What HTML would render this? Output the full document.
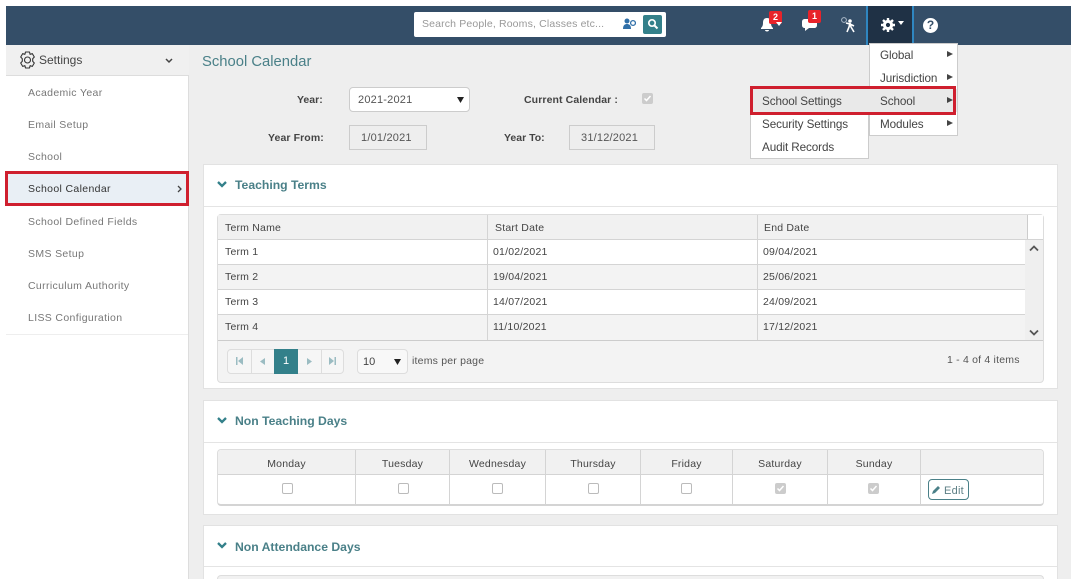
<!DOCTYPE html>
<html><head><meta charset="utf-8"><style>
html,body{margin:0;padding:0;width:1073px;height:579px;overflow:hidden;background:#fff}
body{position:relative;font-family:"Liberation Sans",sans-serif;font-size:11px;color:#444}
#w{left:0;top:0;width:1073px;height:579px;overflow:hidden;filter:blur(.35px)}
div,span,svg{position:absolute;box-sizing:border-box}
.t{white-space:nowrap;line-height:14px}
.nav{left:28px;color:#777;font-size:10.5px;letter-spacing:.35px}
.lbl{font-weight:bold;font-size:10.5px;color:#444}
.box{background:#eee;border:1px solid #ccc}
.card{left:203px;width:855px;background:#fff;border:1px solid #e2e2e2}
.h{left:235px;font-size:12.2px;font-weight:bold;color:#4a8088}
.m{font-size:11.7px;color:#444;letter-spacing:-.1px}
.c{font-size:10.5px;letter-spacing:.2px;color:#444}
.cb{width:11px;height:11px;border:1px solid #bbb;border-radius:2px;background:#fff}
.ck{width:11px;height:11px;border-radius:2px;background:#ccc;color:#fff}
.ln{background:#d4d4d4}
.ctr{text-align:center}
</style></head><body><div id="w">
<div style="left:6px;top:45px;width:1065px;height:534px;background:#eee"></div>
<div style="left:6px;top:6px;width:1065px;height:39px;background:#344e68"></div>

<!-- search -->
<div style="left:414px;top:12px;width:252px;height:25px;background:#fff;border-radius:2px"></div>
<div class="t" style="left:422px;top:17px;color:#999;font-size:10.5px;letter-spacing:.15px">Search People, Rooms, Classes etc...</div>
<svg style="left:623px;top:18px" width="13" height="12" viewBox="0 0 13 12"><circle cx="4" cy="3" r="2.5" fill="#2f6fa8"/><path d="M0 11c0-4 2-5 4-5s4 1 4 5z" fill="#2f6fa8"/><circle cx="10" cy="5" r="2.4" fill="none" stroke="#2f6fa8" stroke-width="1.3"/></svg>
<div style="left:643px;top:15px;width:19px;height:19px;background:#33808a;border-radius:2px"></div>
<svg style="left:647px;top:18px" width="12" height="12" viewBox="0 0 12 12"><circle cx="5" cy="5" r="3.2" fill="none" stroke="#fff" stroke-width="1.7"/><path d="M7.5 7.5l3 3" stroke="#fff" stroke-width="2"/></svg>

<!-- header icons -->
<svg style="left:760px;top:17px" width="15" height="16" viewBox="0 0 15 16"><path d="M7 1c3 0 4 2 4 5 0 3 1 4 2 5v1H1v-1c1-1 2-2 2-5 0-3 1-5 4-5z" fill="#fff"/><path d="M5 13h4c0 2-4 2-4 0z" fill="#fff"/></svg>
<div style="left:769px;top:11px;width:13px;height:13px;background:#e8232a;border-radius:2px;color:#fff;font-size:9px;font-weight:bold;text-align:center;line-height:13px">2</div>
<svg style="left:776px;top:22px" width="7" height="5" viewBox="0 0 7 5"><path d="M0 0h6L3 4z" fill="#fff"/></svg>
<svg style="left:802px;top:18px" width="15" height="14" viewBox="0 0 15 14"><path d="M3 1h9c2 0 3 1 3 3v3c0 2-1 3-3 3H7l-4 3v-3c-2 0-3-1-3-3V4c0-2 1-3 3-3z" fill="#fff"/></svg>
<div style="left:808px;top:10px;width:13px;height:13px;background:#e8232a;border-radius:2px;color:#fff;font-size:9px;font-weight:bold;text-align:center;line-height:13px">1</div>
<svg style="left:841px;top:17px" width="15" height="16" viewBox="0 0 15 16"><circle cx="3" cy="3" r="2.4" fill="none" stroke="#aebccb" stroke-width="1"/><circle cx="9" cy="4" r="1.8" fill="#fff"/><path d="M9 6l-1 4-2 5M9 6l1 4 3 5M5 6l4 1 4 2" stroke="#fff" stroke-width="1.6" fill="none"/></svg>
<div style="left:866px;top:6px;width:48px;height:39px;background:#1f3145;border-left:2px solid #2f86c0;border-right:2px solid #2f86c0"></div>
<svg style="left:881px;top:18px" width="14" height="14" viewBox="0 0 14 14"><circle cx="7" cy="7" r="3.6" fill="none" stroke="#fff" stroke-width="3"/><path d="M7 0v14M0 7h14M2 2l10 10M12 2L2 12" stroke="#fff" stroke-width="2.4" stroke-dasharray="2.6 8.8 2.6 0"/></svg>
<svg style="left:898px;top:21px" width="6" height="5" viewBox="0 0 6 5"><path d="M0 0h6L3 4z" fill="#fff"/></svg>
<div style="left:923px;top:18px;width:15px;height:15px;border-radius:50%;background:#fff;color:#344e68;font-size:12px;font-weight:bold;text-align:center;line-height:15px">?</div>

<!-- sidebar -->
<div style="left:6px;top:45px;width:183px;height:534px;background:#fff;border-right:1px solid #ddd"></div>
<div style="left:6px;top:45px;width:183px;height:31px;background:#f0f0f0;border-bottom:1px solid #ddd"></div>
<svg style="left:19px;top:51px" width="17" height="18" viewBox="0 0 17 18"><path d="M6.5 1h4l.6 2.300 2.200-.7 2 3.400-1.600 1.700v2.600l1.600 1.700-2 3.400-2.200-.7-.6 2.300h-4l-.6-2.300-2.200.7-2-3.400 1.600-1.700V7.700L1.700 6l2-3.400 2.200.7z" fill="none" stroke="#333" stroke-width="1.100" stroke-linejoin="round"/><circle cx="8.500" cy="9" r="3" fill="none" stroke="#333" stroke-width="1.100"/></svg>
<div class="t" style="left:39px;top:53px;font-size:12px;color:#444">Settings</div>
<svg style="left:165px;top:58px" width="8" height="6" viewBox="0 0 8 6"><path d="M1 1l3 3 3-3" fill="none" stroke="#444" stroke-width="1.500"/></svg>
<div class="t nav" style="top:86px">Academic Year</div>
<div class="t nav" style="top:118px">Email Setup</div>
<div class="t nav" style="top:150px">School</div>
<div style="left:5px;top:171px;width:184px;height:35px;background:#e9eff5;border:3px solid #cf1f2e"></div>
<div class="t nav" style="top:182px;color:#333">School Calendar</div>
<svg style="left:177px;top:185px" width="5" height="8" viewBox="0 0 5 8"><path d="M1 1l3 3-3 3" fill="none" stroke="#444" stroke-width="1.300"/></svg>
<div class="t nav" style="top:215px">School Defined Fields</div>
<div class="t nav" style="top:247px">SMS Setup</div>
<div class="t nav" style="top:279px">Curriculum Authority</div>
<div class="t nav" style="top:311px">LISS Configuration</div>
<div style="left:6px;top:334px;width:182px;height:1px;background:#eee"></div>

<!-- title + form -->
<div class="t" style="left:202px;top:54px;font-size:14.800px;color:#4a8088;line-height:16px">School Calendar</div>
<div class="t lbl" style="left:297px;top:93px">Year:</div>
<div style="left:349px;top:87px;width:121px;height:25px;background:#fff;border:1px solid #ccc;border-radius:4px"></div>
<div class="t" style="left:358px;top:93px;color:#555;letter-spacing:.2px">2021-2021</div>
<svg style="left:457px;top:97px" width="7" height="6" viewBox="0 0 7 6"><path d="M0 0h7L3.500 6z" fill="#222"/></svg>
<div class="t lbl" style="left:524px;top:93px;letter-spacing:.1px">Current Calendar :</div>
<div class="ck" style="left:642px;top:93px"></div>
<svg style="left:643px;top:94px" width="9" height="9" viewBox="0 0 9 9"><path d="M1.500 4.500l2 2 4-4.500" fill="none" stroke="#fff" stroke-width="1.500"/></svg>
<div class="t lbl" style="left:268px;top:131px;letter-spacing:.1px">Year From:</div>
<div class="box" style="left:349px;top:125px;width:78px;height:25px"></div>
<div class="t" style="left:361px;top:131px;color:#555;letter-spacing:.2px">1/01/2021</div>
<div class="t lbl" style="left:504px;top:131px">Year To:</div>
<div class="box" style="left:569px;top:125px;width:86px;height:25px"></div>
<div class="t" style="left:581px;top:131px;color:#555;letter-spacing:.2px">31/12/2021</div>

<!-- Teaching terms card -->
<div class="card" style="top:164px;height:225px"></div>
<div style="left:204px;top:206px;width:853px;height:1px;background:#e4e4e4"></div>
<svg style="left:217px;top:181px" width="10" height="7" viewBox="0 0 10 7"><path d="M1 1l4 4 4-4" fill="none" stroke="#33808a" stroke-width="2.300"/></svg>
<div class="t h" style="top:178px">Teaching Terms</div>

<div style="left:217px;top:214px;width:827px;height:169px;background:#f3f3f3;border:1px solid #ddd;border-radius:4px"></div>
<div style="left:218px;top:215px;width:809px;height:24px;background:#f1f1f1"></div>
<div style="left:1027px;top:215px;width:16px;height:24px;background:#fff;border-left:1px solid #ccc"></div>
<div class="ln" style="left:218px;top:239px;width:825px;height:1px"></div>
<div style="left:218px;top:240px;width:807px;height:25px;background:#fff"></div>
<div style="left:218px;top:265px;width:807px;height:25px;background:#f3f3f3"></div>
<div style="left:218px;top:290px;width:807px;height:25px;background:#fff"></div>
<div style="left:218px;top:315px;width:807px;height:25px;background:#f3f3f3"></div>
<div style="left:1025px;top:240px;width:18px;height:100px;background:#efefef"></div>
<div class="ln" style="left:218px;top:264px;width:807px;height:1px"></div>
<div class="ln" style="left:218px;top:289px;width:807px;height:1px"></div>
<div class="ln" style="left:218px;top:314px;width:807px;height:1px"></div>
<div style="left:218px;top:340px;width:825px;height:1px;background:#ccc"></div>
<div class="ln" style="left:487px;top:215px;width:1px;height:125px"></div>
<div class="ln" style="left:757px;top:215px;width:1px;height:125px"></div>
<svg style="left:1029px;top:245px" width="10" height="7" viewBox="0 0 10 7"><path d="M1 5.500l4-4 4 4" fill="none" stroke="#555" stroke-width="1.800"/></svg>
<svg style="left:1029px;top:329px" width="10" height="7" viewBox="0 0 10 7"><path d="M1 1.500l4 4 4-4" fill="none" stroke="#555" stroke-width="1.800"/></svg>

<div class="t c" style="left:225px;top:221px">Term Name</div><div class="t c" style="left:495px;top:221px">Start Date</div><div class="t c" style="left:764px;top:221px">End Date</div>
<div class="t c" style="left:225px;top:245px">Term 1</div><div class="t c" style="left:493px;top:245px">01/02/2021</div><div class="t c" style="left:763px;top:245px">09/04/2021</div>
<div class="t c" style="left:225px;top:270px">Term 2</div><div class="t c" style="left:493px;top:270px">19/04/2021</div><div class="t c" style="left:763px;top:270px">25/06/2021</div>
<div class="t c" style="left:225px;top:295px">Term 3</div><div class="t c" style="left:493px;top:295px">14/07/2021</div><div class="t c" style="left:763px;top:295px">24/09/2021</div>
<div class="t c" style="left:225px;top:320px">Term 4</div><div class="t c" style="left:493px;top:320px">11/10/2021</div><div class="t c" style="left:763px;top:320px">17/12/2021</div>

<!-- pager -->
<div style="left:227px;top:349px;width:117px;height:25px;background:#f6f6f6;border:1px solid #ddd;border-radius:4px"></div>
<div style="left:251px;top:350px;width:1px;height:23px;background:#ddd"></div>
<div style="left:274px;top:349px;width:24px;height:25px;background:#33808a;color:#fff;text-align:center;line-height:24px;font-size:11px">1</div>
<div style="left:321px;top:350px;width:1px;height:23px;background:#ddd"></div>
<svg style="left:235px;top:357px" width="9" height="8" viewBox="0 0 9 8"><path d="M1 0h1.500v8H1zM8 0v8L3 4z" fill="#9bbcc2"/></svg>
<svg style="left:259px;top:358px" width="7" height="7" viewBox="0 0 7 7"><path d="M6 0v7L1 3.500z" fill="#9bbcc2"/></svg>
<svg style="left:306px;top:358px" width="7" height="7" viewBox="0 0 7 7"><path d="M1 0v7l5-3.500z" fill="#9bbcc2"/></svg>
<svg style="left:328px;top:357px" width="9" height="8" viewBox="0 0 9 8"><path d="M1 0v8l5-4zM6.500 0H8v8H6.500z" fill="#9bbcc2"/></svg>
<div style="left:357px;top:349px;width:51px;height:25px;background:#f8f8f8;border:1px solid #ddd;border-radius:4px"></div>
<div class="t" style="left:363px;top:355px;color:#444">10</div>
<svg style="left:394px;top:359px" width="7" height="6" viewBox="0 0 7 6"><path d="M0 0h7L3.500 6z" fill="#222"/></svg>
<div class="t c" style="left:412px;top:354px;color:#555">items per page</div>
<div class="t c" style="left:947px;top:353px;color:#555">1 - 4 of 4 items</div>

<!-- Non teaching -->
<div class="card" style="top:400px;height:115px"></div>
<div style="left:204px;top:442px;width:853px;height:1px;background:#e4e4e4"></div>
<svg style="left:217px;top:417px" width="10" height="7" viewBox="0 0 10 7"><path d="M1 1l4 4 4-4" fill="none" stroke="#33808a" stroke-width="2.300"/></svg>
<div class="t h" style="top:414px">Non Teaching Days</div>
<div style="left:217px;top:449px;width:827px;height:57px;background:#fff;border:1px solid #ddd;border-bottom:2px solid #d4d4d4;border-radius:4px"></div>
<div style="left:218px;top:450px;width:825px;height:24px;background:#f1f1f1;border-radius:3px 3px 0 0"></div>
<div class="ln" style="left:218px;top:474px;width:825px;height:1px"></div>
<div class="ln" style="left:355px;top:450px;width:1px;height:55px"></div>
<div class="ln" style="left:449px;top:450px;width:1px;height:55px"></div>
<div class="ln" style="left:545px;top:450px;width:1px;height:55px"></div>
<div class="ln" style="left:640px;top:450px;width:1px;height:55px"></div>
<div class="ln" style="left:732px;top:450px;width:1px;height:55px"></div>
<div class="ln" style="left:827px;top:450px;width:1px;height:55px"></div>
<div class="ln" style="left:920px;top:450px;width:1px;height:55px"></div>
<div class="t c ctr" style="left:218px;width:137px;top:457px">Monday</div>
<div class="t c ctr" style="left:356px;width:93px;top:457px">Tuesday</div>
<div class="t c ctr" style="left:450px;width:95px;top:457px">Wednesday</div>
<div class="t c ctr" style="left:546px;width:94px;top:457px">Thursday</div>
<div class="t c ctr" style="left:641px;width:91px;top:457px">Friday</div>
<div class="t c ctr" style="left:733px;width:94px;top:457px">Saturday</div>
<div class="t c ctr" style="left:828px;width:92px;top:457px">Sunday</div>
<div class="cb" style="left:282px;top:483px"></div>
<div class="cb" style="left:398px;top:483px"></div>
<div class="cb" style="left:492px;top:483px"></div>
<div class="cb" style="left:588px;top:483px"></div>
<div class="cb" style="left:681px;top:483px"></div>
<div class="ck" style="left:775px;top:483px"></div>
<svg style="left:776px;top:484px" width="9" height="9" viewBox="0 0 9 9"><path d="M1.500 4.500l2 2 4-4.500" fill="none" stroke="#fff" stroke-width="1.500"/></svg>
<div class="ck" style="left:868px;top:483px"></div>
<svg style="left:869px;top:484px" width="9" height="9" viewBox="0 0 9 9"><path d="M1.500 4.500l2 2 4-4.500" fill="none" stroke="#fff" stroke-width="1.500"/></svg>
<div style="left:928px;top:479px;width:41px;height:21px;background:#fff;border:1px solid #4a8088;border-radius:4px"></div>
<svg style="left:932px;top:485px" width="9" height="9" viewBox="0 0 9 9"><path d="M0 9l1-3 5-5 2 2-5 5z" fill="#4a8088"/></svg>
<div class="t" style="left:944px;top:484px;font-size:11px;color:#5d7f85;letter-spacing:.25px">Edit</div>

<!-- Non attendance -->
<div class="card" style="top:525px;height:54px;border-bottom:0"></div>
<div style="left:204px;top:566px;width:853px;height:1px;background:#e4e4e4"></div>
<svg style="left:217px;top:542px" width="10" height="7" viewBox="0 0 10 7"><path d="M1 1l4 4 4-4" fill="none" stroke="#33808a" stroke-width="2.300"/></svg>
<div class="t h" style="top:540px">Non Attendance Days</div>
<div style="left:217px;top:575px;width:827px;height:4px;background:#f1f1f1;border:1px solid #ddd;border-bottom:0;border-radius:4px 4px 0 0"></div>

<!-- menus -->
<div style="left:869px;top:43px;width:89px;height:93px;background:#fff;border:1px solid #ccc"></div>
<div style="left:750px;top:87px;width:119px;height:72px;background:#fff;border:1px solid #ccc"></div>
<div style="left:751px;top:89px;width:206px;height:23px;background:#e9e9e9"></div>
<div class="t m" style="left:880px;top:49px">Global</div>
<div class="t m" style="left:880px;top:72px">Jurisdiction</div>
<div class="t m" style="left:880px;top:95px">School</div>
<div class="t m" style="left:880px;top:118px">Modules</div>
<div class="t m" style="left:762px;top:95px">School Settings</div>
<div class="t m" style="left:762px;top:118px">Security Settings</div>
<div class="t m" style="left:762px;top:141px">Audit Records</div>
<svg style="left:947px;top:51px" width="6" height="6" viewBox="0 0 6 6"><path d="M0 0l6 3-6 3z" fill="#444"/></svg>
<svg style="left:947px;top:74px" width="6" height="6" viewBox="0 0 6 6"><path d="M0 0l6 3-6 3z" fill="#444"/></svg>
<svg style="left:947px;top:97px" width="6" height="6" viewBox="0 0 6 6"><path d="M0 0l6 3-6 3z" fill="#444"/></svg>
<svg style="left:947px;top:120px" width="6" height="6" viewBox="0 0 6 6"><path d="M0 0l6 3-6 3z" fill="#444"/></svg>
<div style="left:750px;top:86px;width:206px;height:29px;border:3px solid #cf1f2e"></div>
</div></body></html>
